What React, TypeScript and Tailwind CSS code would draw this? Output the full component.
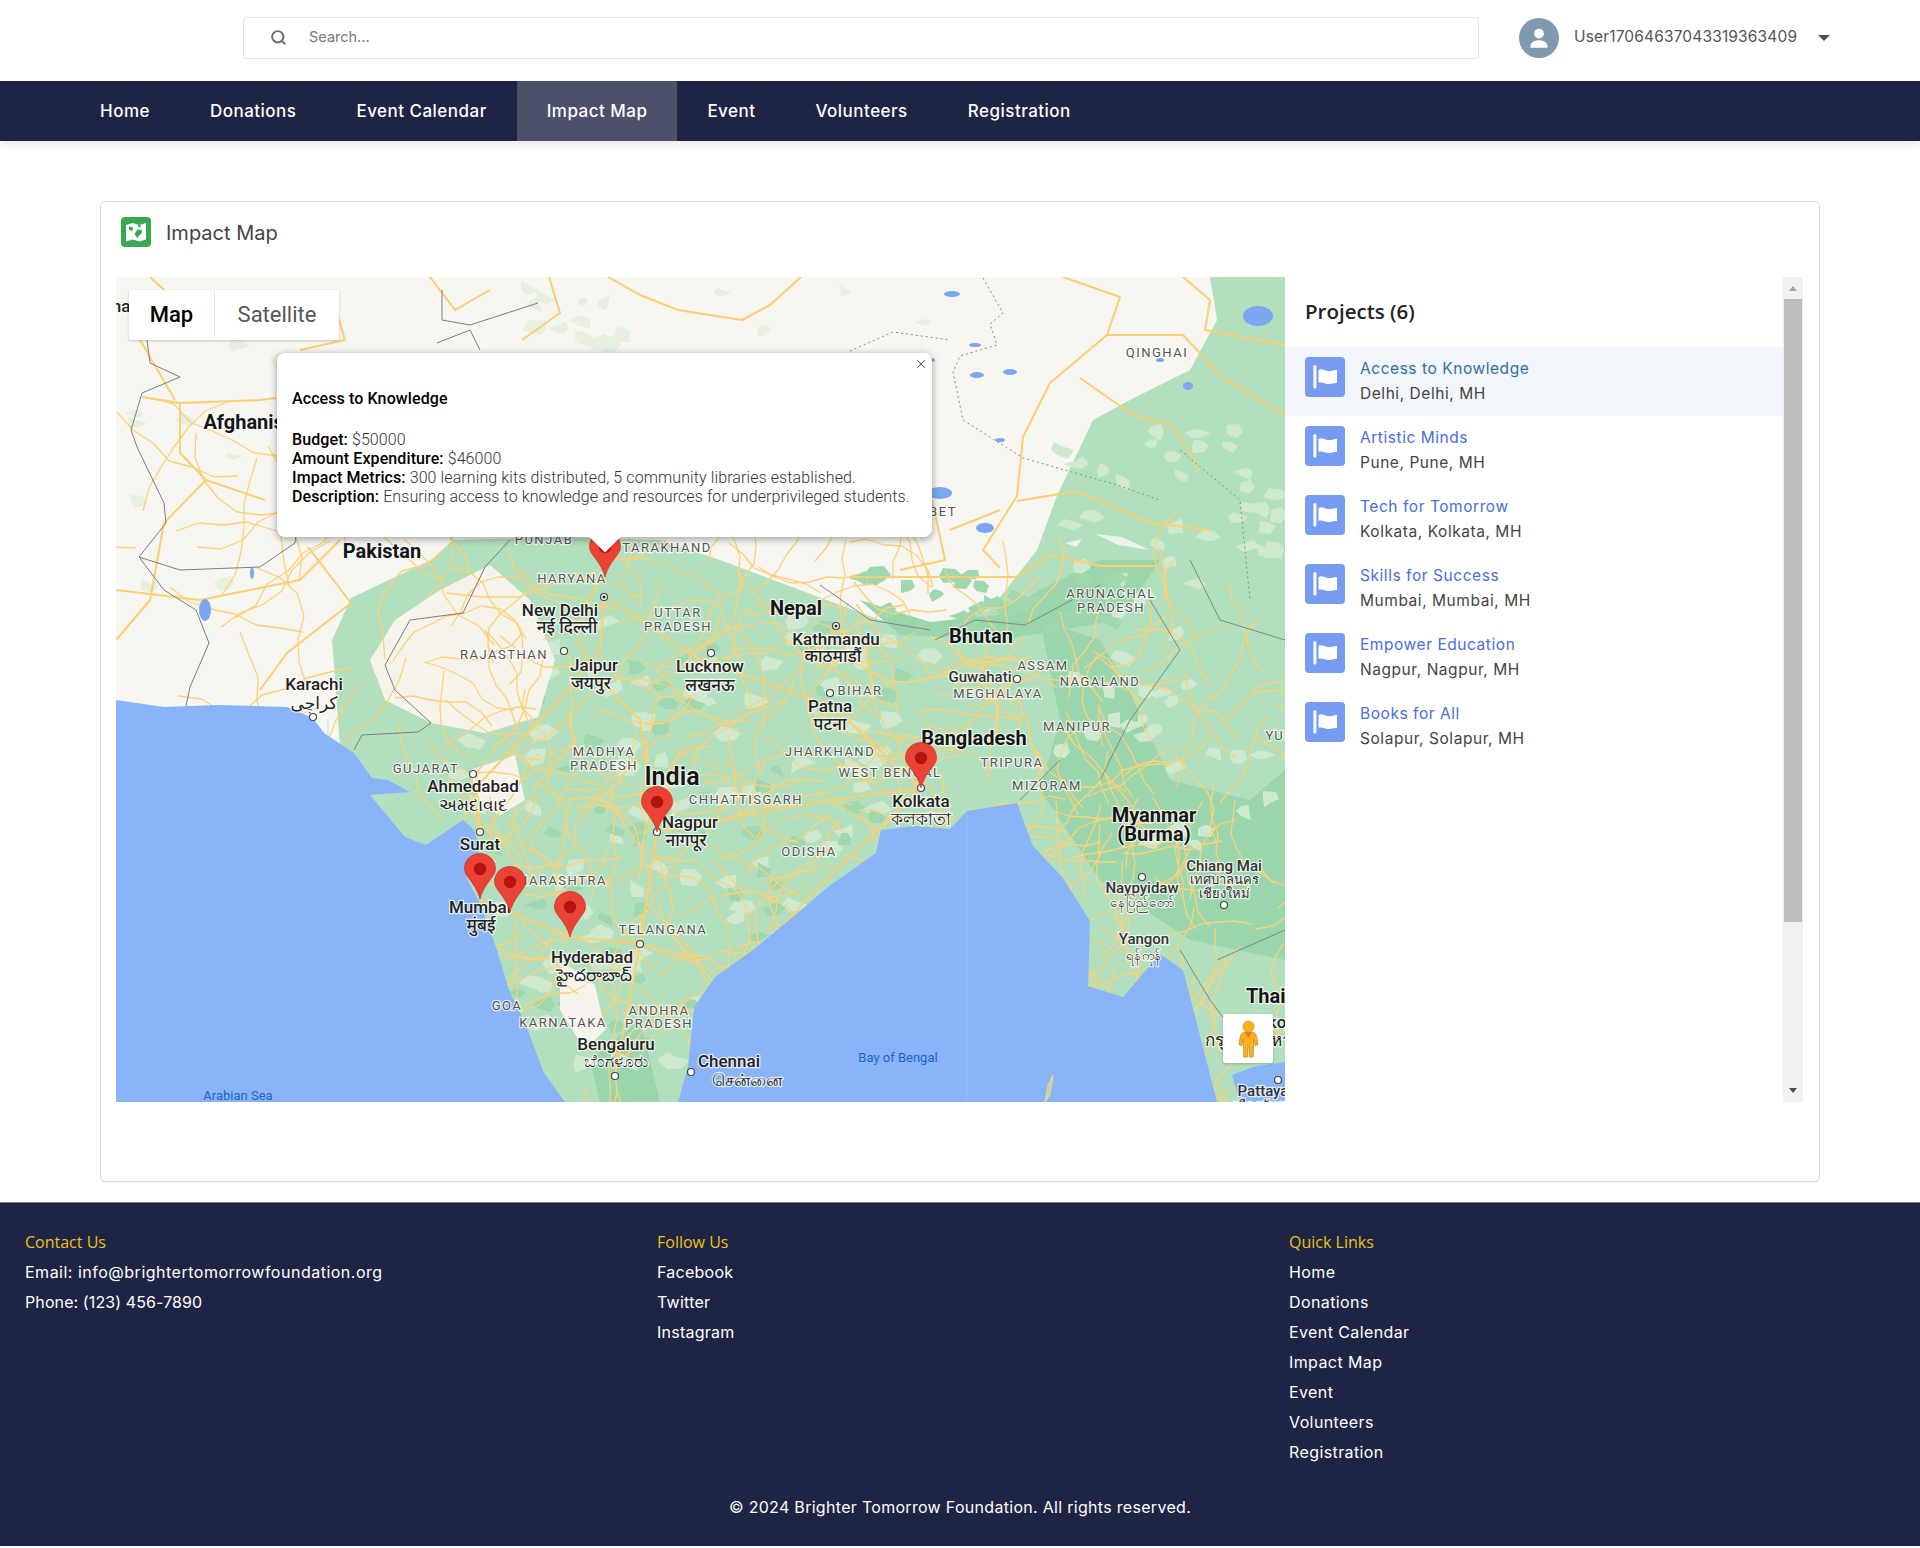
import React from "react";
import { Search, X } from "lucide-react";

const navItems = ["Home", "Donations", "Event Calendar", "Impact Map", "Event", "Volunteers", "Registration"];

const projects = [
  ["Access to Knowledge", "Delhi, Delhi, MH"],
  ["Artistic Minds", "Pune, Pune, MH"],
  ["Tech for Tomorrow", "Kolkata, Kolkata, MH"],
  ["Skills for Success", "Mumbai, Mumbai, MH"],
  ["Empower Education", "Nagpur, Nagpur, MH"],
  ["Books for All", "Solapur, Solapur, MH"],
];

// map labels: text, x, y, kind (c = country, t = city, s = state, b = sea)
const labels: [string, number, number, string][] = [
  ["na", 121, 308, "t"], ["QINGHAI", 1157, 354, "s"], ["Afghanistan", 258, 424, "c"], ["Pakistan", 382, 553, "c"],
  ["PUNJAB", 544, 541, "s"], ["TARAKHAND", 667, 549, "s"], ["HARYANA", 572, 580, "s"], ["BET", 943, 513, "s"],
  ["New Delhi", 560, 612, "t"], ["नई दिल्ली", 567, 629, "t"], ["UTTAR", 678, 614, "s"], ["PRADESH", 678, 628, "s"],
  ["Nepal", 796, 610, "c"], ["Kathmandu", 836, 641, "t"], ["काठमाडौं", 833, 658, "t"], ["RAJASTHAN", 504, 656, "s"],
  ["Jaipur", 594, 667, "t"], ["जयपुर", 591, 685, "t"], ["Lucknow", 710, 668, "t"], ["लखनऊ", 710, 687, "t"],
  ["Karachi", 314, 686, "t"], ["كراچی", 314, 705, "t"], ["BIHAR", 860, 692, "s"], ["Patna", 830, 708, "t"], ["पटना", 830, 726, "t"],
  ["MADHYA", 604, 753, "s"], ["PRADESH", 604, 767, "s"], ["JHARKHAND", 830, 753, "s"], ["GUJARAT", 426, 770, "s"],
  ["Ahmedabad", 473, 788, "t"], ["અમદાવાદ", 473, 807, "t"], ["India", 672, 778, "i"], ["WEST BENGAL", 890, 774, "s"],
  ["CHHATTISGARH", 746, 801, "s"], ["Nagpur", 690, 824, "t"], ["नागपूर", 686, 842, "t"], ["Kolkata", 921, 803, "t"],
  ["কলকাতা", 921, 821, "t"], ["ODISHA", 809, 853, "s"], ["Surat", 480, 846, "t"], ["MAHARASHTRA", 551, 882, "s"],
  ["Mumbai", 480, 909, "t"], ["मुंबई", 481, 927, "t"], ["TELANGANA", 663, 931, "s"], ["Hyderabad", 592, 959, "t"],
  ["హైదరాబాద్", 594, 977, "t"], ["GOA", 507, 1007, "s"], ["KARNATAKA", 563, 1024, "s"], ["ANDHRA", 659, 1012, "s"],
  ["PRADESH", 659, 1025, "s"], ["Bengaluru", 616, 1046, "t"], ["ಬೆಂಗಳೂರು", 616, 1063, "t"], ["Chennai", 729, 1063, "t"],
  ["சென்னை", 747, 1082, "t"], ["Arabian Sea", 238, 1097, "b"], ["Bay of Bengal", 898, 1059, "b"],
  ["Bangladesh", 974, 740, "c"], ["Bhutan", 981, 638, "c"], ["ARUNACHAL", 1111, 595, "s"], ["PRADESH", 1111, 609, "s"],
  ["ASSAM", 1043, 667, "s"], ["NAGALAND", 1100, 683, "s"], ["Guwahati", 980, 678, "n"], ["MEGHALAYA", 998, 695, "s"],
  ["MANIPUR", 1077, 728, "s"], ["TRIPURA", 1012, 764, "s"], ["MIZORAM", 1047, 787, "s"], ["Myanmar", 1154, 817, "c"],
  ["(Burma)", 1154, 836, "c"], ["Chiang Mai", 1224, 867, "n"], ["เทศบาลนคร", 1224, 881, "m"], ["เชียงใหม่", 1224, 895, "m"],
  ["Naypyidaw", 1142, 889, "n"], ["နေပြည်တော်", 1142, 904, "m"], ["Yangon", 1144, 940, "n"], ["ရန်ကုန်", 1144, 957, "m"],
  ["Thailand", 1285, 998, "c"], ["Bangkok", 1262, 1024, "t"], ["กรุงเทพมหานคร", 1264, 1042, "t"], ["Pattaya", 1263, 1092, "n"],
  ["เมืองพัทยา", 1263, 1107, "m"], ["YUNNAN", 1296, 737, "s"],
];

const dots: [number, number][] = [
  [604, 597], [836, 626], [711, 653], [564, 651], [830, 693], [473, 774], [480, 832], [921, 788], [657, 832],
  [640, 944], [615, 1076], [691, 1072], [313, 717], [1142, 877], [1224, 905], [1278, 1080], [1017, 679],
];

function seeded(seed: number) {
  let s = seed;
  return () => {
    s = (s + 0x6d2b79f5) | 0;
    let t = Math.imul(s ^ (s >>> 15), 1 | s);
    t = (t + Math.imul(t ^ (t >>> 7), 61 | t)) ^ t;
    return ((t ^ (t >>> 14)) >>> 0) / 4294967296;
  };
}

// seeded walk so the road net stays the same between runs
function makeRoads(seed: number, count: number, x0: number, y0: number, w: number, h: number, step: number) {
  const rnd = seeded(seed);
  const out: string[] = [];
  for (let i = 0; i < count; i++) {
    let x = x0 + rnd() * w;
    let y = y0 + rnd() * h;
    let a = rnd() * Math.PI * 2;
    let d = `M${x.toFixed(0)} ${y.toFixed(0)}`;
    for (let j = 0; j < 6; j++) {
      a += (rnd() - 0.5) * 1.2;
      x += Math.cos(a) * step;
      y += Math.sin(a) * step;
      d += `L${x.toFixed(0)} ${y.toFixed(0)}`;
    }
    out.push(d);
  }
  return out;
}

function makeBlobs(seed: number, count: number, x0: number, y0: number, w: number, h: number, size: number) {
  const rnd = seeded(seed);
  const out: string[] = [];
  for (let i = 0; i < count; i++) {
    const x = x0 + rnd() * w;
    const y = y0 + rnd() * h;
    let d = "";
    for (let j = 0; j < 6; j++) {
      const a = (j / 6) * Math.PI * 2;
      const r = size * (0.35 + rnd());
      d += `${j ? "L" : "M"}${(x + Math.cos(a) * r).toFixed(0)} ${(y + Math.sin(a) * r * 0.7).toFixed(0)}`;
    }
    out.push(`${d}Z`);
  }
  return out;
}

const indiaRoads = makeRoads(7, 240, 440, 560, 500, 540, 18);
const eastRoads = makeRoads(21, 130, 960, 600, 325, 500, 17);
const westRoads = makeRoads(33, 26, 116, 440, 340, 260, 24);

const mainRoads = [
  "M608 277L640 295L678 310L742 320L770 305L801 277",
  "M522 340L560 313L549 277",
  "M1063 277L1120 297L1107 335L1050 383L1023 437L1017 496L983 550L1000 568",
  "M1107 335L1183 335L1223 378L1285 415",
  "M1080 378L1133 415L1173 426L1200 470",
  "M1017 501L1077 491L1150 523L1210 530",
  "M850 577L943 577L1017 577L1050 555L1100 566L1157 566",
  "M1183 277L1210 300L1205 330L1285 345",
  "M142 397L180 403L260 400L276 398",
  "M180 403L180 453L206 480L265 500",
  "M206 480L164 523L150 600L116 640",
  "M150 277L175 300L140 340L175 400",
  "M308 547L351 603L287 653L260 690",
  "M116 590L200 600L300 580L340 540",
  "M330 290L345 340L300 350M430 277L455 310L490 290",
  "M932 500L945 560L900 570M950 530L1000 510",
  "M604 577L573 620L590 670L640 720L657 832L640 944L615 1076",
  "M604 597L700 660L830 705L921 788L815 890L700 1020L691 1072",
  "M480 832L473 790L560 700L600 650L604 597",
  "M480 900L570 937L640 944L700 960",
  "M657 832L830 800L921 788",
];

const seaWest =
  "M116 700L164 707L217 705L287 707L313 718L324 733L354 753L372 778L388 780L410 792L370 795L405 837L426 845L463 820L474 830L480 850L466 877L480 903L496 947L509 990L525 1023L544 1073L565 1102L116 1102Z";
const seaEast =
  "M678 1102L688 1067L694 1007L715 977L753 950L801 910L828 887L876 853L881 830L915 826L950 829L967 811L1017 803L1033 846L1063 878L1090 921L1088 986L1123 997L1160 954L1183 970L1197 1024L1217 1102Z";
const seaGulf = "M1240 1102L1232 1075L1253 1067L1285 1062L1285 1102Z";

const green =
  "M431 560L453 540L560 537L660 540L720 560L800 590L880 620L930 625L990 610L1037 550L1057 496L1093 420L1130 400L1190 370L1217 320L1210 277L1285 277L1285 1102L500 1102L440 950L340 745L332 640L351 598Z";
const darkGreens = [
  "M1040 620L1100 640L1135 700L1170 780L1250 800L1285 770L1285 960L1190 940L1100 880L1040 790L1060 720Z",
  "M860 600L930 622L1000 615L1040 590L1100 560L1160 560L1120 620L1000 640L900 635Z",
  "M590 1060L640 1020L660 1102L600 1102Z",
];
const creams = [
  "M490 565L440 590L395 620L370 660L385 700L431 723L485 733L538 717L555 660L530 600Z",
  "M470 770L515 755L525 800L500 815L480 805Z",
  "M560 960L595 985L605 1030L585 1050L560 1010Z",
];
const lakes = [
  [1258, 316, 15, 10], [952, 294, 8, 3], [977, 375, 7, 3], [1010, 372, 7, 3], [985, 528, 9, 5], [940, 493, 12, 6],
  [975, 345, 6, 2], [930, 360, 5, 2], [1000, 440, 5, 2], [1188, 386, 5, 4], [205, 610, 6, 11], [252, 573, 2, 6], [1160, 360, 4, 2],
];

const lightBlobs = [
  ...makeBlobs(3, 110, 450, 620, 480, 450, 13),
  ...makeBlobs(5, 60, 1060, 430, 225, 420, 11),
];
const darkBlobs = [
  ...makeBlobs(9, 60, 480, 620, 440, 450, 10),
  ...makeBlobs(11, 30, 860, 570, 260, 60, 11),
];
const paleBlobs = [
  ...makeBlobs(13, 12, 520, 277, 110, 70, 13),
  ...makeBlobs(15, 14, 116, 300, 300, 300, 11),
  ...makeBlobs(17, 10, 700, 277, 330, 240, 8),
];

function FlagIcon() {
  return (
    <svg viewBox="0 0 40 40" className="h-10 w-10 shrink-0 rounded-[4px] bg-[#769bf0]">
      <rect x="8.4" y="8" width="3" height="23.5" rx="1.5" fill="#fff" />
      <path d="M13.5 13c4-2 7 1.400 10 1.200 3.600 0 5.600-1.600 8.500-1.200v13c-3.200-.4-5.200 1-8.500 1-3.300 0-6.500-2.400-10-1.200z" fill="#fff" />
    </svg>
  );
}

function MapIcon() {
  return (
    <svg viewBox="0 0 30 30" className="h-[30px] w-[30px] shrink-0 rounded-[4px] bg-[#3ba755]">
      <path d="M5 8l6.500-2 7 2L25 6v16.500L18.500 24.500l-7-2L5 24.500z" fill="#fff" />
      <path d="M8 9.500l3 .5 1.500 2.500-2 1.500-2.500-1.500zM13.500 17l3-4.500 4.500.5-.5 3.500-3 2.500-1 2.500zM17 7.500l3 1-1 2-2-1z" fill="#3ba755" />
    </svg>
  );
}

function Pin({ x, y }: { x: number; y: number }) {
  return (
    <g transform={`translate(${x - 16} ${y - 46})`}>
      <path d="M16 46C13.500 36 8 30 3.500 23.500 1 20 .5 18 .5 15.500.5 7 7.500.5 16 .5s15.500 6.500 15.500 15c0 2.500-.5 4.500-3 8C24 30 18.500 36 16 46z" fill="#ea4335" stroke="#c5221f" strokeWidth=".6" />
      <circle cx="16" cy="16" r="6.200" fill="#b31412" />
    </g>
  );
}

function ImpactMapCanvas() {
  const allRoads = [...indiaRoads, ...eastRoads, ...westRoads];
  return (
    <svg viewBox="116 277 1169 825" className="block h-full w-full">
      <rect x="116" y="277" width="1169" height="825" fill="#f8f6f1" />
      {paleBlobs.map((d) => <path key={d} d={d} fill="#e6efe0" />)}
      <path d={green} fill="#b2dfbd" />
      {darkGreens.map((d) => <path key={d} d={d} fill="#9ad5ab" />)}
      {lightBlobs.map((d) => <path key={d} d={d} fill="#cfe9d0" />)}
      {darkBlobs.map((d) => <path key={d} d={d} fill="#9fd7af" />)}
      {creams.map((d) => <path key={d} d={d} fill="#f6f3ea" />)}
      <path d="M1095 534L1122 537L1150 550L1118 545ZM1065 543L1082 539L1076 547Z" fill="#e9f3ea" />
      {allRoads.map((d, i) => <path key={i} d={d} fill="none" stroke="#fbd27a" strokeWidth="1.300" strokeLinejoin="round" />)}
      {mainRoads.map((d) => <path key={d} d={d} fill="none" stroke="#fbcf72" strokeWidth="2" strokeLinejoin="round" />)}
      {lakes.map(([cx, cy, rx, ry]) => <ellipse key={`${cx}-${cy}`} cx={cx} cy={cy} rx={rx} ry={ry} fill="#7aa7f0" />)}
      <path d={seaWest} fill="#8ab4f8" />
      <path d={seaEast} fill="#8ab4f8" />
      <path d={seaGulf} fill="#8ab4f8" />
      <path d="M1045 1102L1048 1085L1053 1075L1050 1095Z" fill="#aedcb9" stroke="#fbd27a" />
      <path d="M328 1102V720M967 1102V811" stroke="#9dbff7" strokeWidth="1" fill="none" opacity=".6" />
      <path d="M147 340L150 363L180 377L142 393L131 430L137 447L164 503L166 523L139 557L180 570L260 567L295 543L300 500M139 557L164 590L196 610L209 643L190 687L186 706M442 290L442 320L470 325L538 303M437 343L470 330L480 350M510 540L485 567L463 613L410 620L385 665L395 690L431 723L418 732L362 735L354 750" fill="none" stroke="#7d7d7d" strokeWidth="1" />
      <path d="M820 585L870 620L930 630M935 640L975 620L1025 625L1100 585M1150 600L1180 650L1130 720L1100 780M1060 760L1020 800M1190 560L1220 620L1285 640M1180 950L1210 1000L1240 1040M1217 960L1285 930" fill="none" stroke="#7d8c80" strokeWidth="1" />
      <path d="M983 278L1003 313L990 324L997 345L960 356L953 372L963 420L1023 458L1117 485L1160 500M850 351L893 332L950 340M1180 450L1240 500L1250 600" fill="none" stroke="#8a8a8a" strokeWidth="1" strokeDasharray="2 3" />
      {labels.map(([text, x, y, kind]) => {
        const style: Record<string, string> = {
          c: "text-[20px] font-bold fill-[#151515]",
          i: "text-[25px] font-semibold fill-[#151515]",
          t: "text-[17px] font-medium fill-[#222222]",
          n: "text-[15px] font-medium fill-[#333333]",
          m: "text-[13px] font-medium fill-[#333333]",
          s: "text-[13px] font-normal tracking-[1.500px] fill-[#555555]",
          b: "text-[13px] font-normal fill-[#1a66c9]",
        };
        return (
          <text
            key={`${text}-${x}`}
            x={x}
            y={y}
            textAnchor="middle"
            dominantBaseline="middle"
            stroke={kind === "b" ? "none" : "#ffffff"}
            strokeOpacity={0.75}
            strokeWidth={2.500}
            paintOrder="stroke"
            className={`${style[kind]} font-['Roboto','Noto_Sans','DejaVu_Sans',sans-serif]`}
          >
            {text}
          </text>
        );
      })}
      {dots.map(([cx, cy]) => <circle key={`${cx}-${cy}`} cx={cx} cy={cy} r="3.500" fill="#fff" stroke="#444" strokeWidth="1.200" />)}
      <circle cx="604" cy="597" r="1.500" fill="#222" />
      <circle cx="836" cy="626" r="1.500" fill="#222" />
      <Pin x={605} y={577} />
      <Pin x={921} y={788} />
      <Pin x={657} y={832} />
      <Pin x={480} y={899} />
      <Pin x={510} y={912} />
      <Pin x={570} y={937} />
    </svg>
  );
}

function MapPanel() {
  return (
    <div className="relative h-[825px] w-[1169px] shrink-0 overflow-hidden">
      <ImpactMapCanvas />

      <div className="absolute left-[13px] top-[13px] flex h-[50px] rounded-[2px] bg-white pb-[2px] text-[22px] font-['Roboto',sans-serif] shadow-[0_1px_3px_rgba(0,0,0,0.2)]">
        <span className="flex w-[86px] items-center justify-center border-r border-[#e6e6e6] font-medium text-black">Map</span>
        <span className="flex w-[124px] items-center justify-center text-[#565656]">Satellite</span>
      </div>

      <div className="absolute left-[161px] top-[76px] h-[184px] w-[655px] rounded-lg bg-white px-[15px] pt-[36px] text-[16px] font-light leading-[19px] tracking-[0.100px] text-[#333333] shadow-[0_2px_7px_1px_rgba(0,0,0,0.3)] font-['Roboto',sans-serif]">
        <p className="font-medium text-black">Access to Knowledge</p>
        <p className="mt-[22px]"><b className="font-medium text-black">Budget:</b> $50000</p>
        <p><b className="font-medium text-black">Amount Expenditure:</b> $46000</p>
        <p><b className="font-medium text-black">Impact Metrics:</b> 300 learning kits distributed, 5 community libraries established.</p>
        <p><b className="font-medium text-black">Description:</b> Ensuring access to knowledge and resources for underprivileged students.</p>
        <X className="absolute right-[4px] top-[4px] h-[14px] w-[14px] text-[#555555]" strokeWidth={1.800} />
        <div className="absolute bottom-[-11px] left-[317px] h-[22px] w-[22px] rotate-45 bg-white" />
      </div>

      <div className="absolute left-[1107px] top-[737px] flex h-[49px] w-[50px] items-center justify-center rounded-[2px] bg-white shadow-[0_1px_3px_rgba(0,0,0,0.2)]">
        <svg viewBox="0 0 24 40" className="h-[38px] w-[23px]">
          <circle cx="12" cy="7" r="6" fill="#fbb117" stroke="#b8862a" strokeWidth=".5" />
          <path d="M7 13h10c3 1 4 4 5 13l-3 1-1.500-7-.5 19h-4l-.5-11h-1L11 39H7l-.5-19L5 27l-3-1c1-9 2-12 5-13z" fill="#fbb117" stroke="#b0852d" strokeWidth=".7" />
          <path d="M8 13h8l-4 6z" fill="#e8762c" />
        </svg>
      </div>
    </div>
  );
}

function ProjectList() {
  return (
    <div className="flex h-[825px] w-[518px] shrink-0">
      <div className="min-w-0 flex-1">
        <h2 className="pl-[20px] pt-[22px] text-[20.500px] font-semibold leading-[24px] text-[#222222] font-['Open_Sans',sans-serif]">Projects (6)</h2>
        <ul className="mt-[24px]">
          {projects.map(([name, place], i) => (
            <li key={name} className={`flex h-[69px] items-start gap-[15px] px-[20px] pt-[10px] ${i === 0 ? "bg-[#f3f7fb]" : ""}`}>
              <FlagIcon />
              <div className="-mt-[1px] font-['Inter',sans-serif] text-[15.500px] leading-[25px] tracking-[0.550px]">
                <p className={i === 0 ? "text-[#2f6f9f]" : "text-[#4a6de0]"}>{name}</p>
                <p className="text-[#444444]">{place}</p>
              </div>
            </li>
          ))}
        </ul>
      </div>
      <div className="flex w-[20px] flex-col items-center bg-[#f1f1f1]">
        <span className="mt-[9px] h-0 w-0 border-x-[4px] border-b-[5px] border-x-transparent border-b-[#a3a3a3]" />
        <span className="mt-[8px] h-[623px] w-[18px] bg-[#bdbdbd]" />
        <span className="mt-auto mb-[9px] h-0 w-0 border-x-[4px] border-t-[5px] border-x-transparent border-t-[#505050]" />
      </div>
    </div>
  );
}

export default function App() {
  return (
    <div className="min-h-[1548px] bg-white font-['Inter',sans-serif]">
      <header className="flex h-[81px] items-start pl-[243px] pt-[17px]">
        <div className="flex h-[42px] w-[1236px] items-center rounded-[4px] border border-[#e5e5e5] pb-[2px] pl-[26px]">
          <Search className="h-[17px] w-[17px] text-[#6f6f6f]" strokeWidth={2.800} />
          <span className="ml-[22px] text-[14.500px] text-[#7a7a7a]">Search...</span>
        </div>
        <div className="ml-[40px] mt-[1px] flex h-[40px] w-[40px] items-center justify-center rounded-full bg-[#8199af]">
          <svg viewBox="0 0 24 24" className="h-[26px] w-[26px]" fill="#fff">
            <circle cx="12" cy="8" r="4.500" />
            <path d="M4 20c0-4 3.500-6 8-6s8 2 8 6c0 .6-.4 1-1 1H5c-.6 0-1-.4-1-1z" />
          </svg>
        </div>
        <span className="ml-[15px] mt-[10px] text-[15.500px] leading-[20px] tracking-[0.150px] text-[#555555]">User17064637043319363409</span>
        <span className="ml-[21px] mt-[18px] h-0 w-0 border-x-[6px] border-t-[6px] border-x-transparent border-t-[#505050]" />
      </header>

      <nav className="flex h-[60px] bg-[#1e2444] pl-[70px] shadow-[0_4px_8px_rgba(0,0,0,0.08)]">
        {navItems.map((item) => (
          <a key={item} className={`flex items-center px-[30px] pt-[1px] text-[17px] font-medium tracking-[0.480px] text-white ${item === "Impact Map" ? "bg-[#4c5068]" : ""}`}>
            {item}
          </a>
        ))}
      </nav>

      <main className="px-[100px] pb-[20px] pt-[60px]">
        <section className="h-[981px] rounded-[5px] border border-[#d9d9d9] shadow-[0_1px_1px_rgba(0,0,0,0.05)]">
          <div className="flex h-[75px] items-start gap-[15px] pl-[20px] pt-[15px]">
            <MapIcon />
            <h1 className="mt-[1px] text-[20px] leading-[30px] text-[#444444]">Impact Map</h1>
          </div>
          <div className="flex pl-[15px]">
            <MapPanel />
            <ProjectList />
          </div>
        </section>
      </main>

      <footer className="h-[344px] border-t border-[#777b8c] bg-[#1e2444] pt-[24px] text-[16px] leading-[30px] tracking-[0.400px] text-white">
        <div className="grid grid-cols-[632px_632px_1fr] pl-[25px]">
          <div>
            <h3 className="tracking-normal text-[#eec211] font-['Open_Sans',sans-serif]">Contact Us</h3>
            <p className="tracking-[0.500px]">Email: info@brightertomorrowfoundation.org</p>
            <p className="tracking-[0.100px]">Phone: (123) 456-7890</p>
          </div>
          <div className="tracking-[0.250px]">
            <h3 className="tracking-normal text-[#eec211] font-['Open_Sans',sans-serif]">Follow Us</h3>
            <p>Facebook</p>
            <p>Twitter</p>
            <p>Instagram</p>
          </div>
          <div>
            <h3 className="tracking-normal text-[#eec211] font-['Open_Sans',sans-serif]">Quick Links</h3>
            {navItems.map((item) => <p key={item}>{item}</p>)}
          </div>
        </div>
        <p className="mt-[25px] text-center tracking-[0.300px]">© 2024 Brighter Tomorrow Foundation. All rights reserved.</p>
      </footer>
    </div>
  );
}
